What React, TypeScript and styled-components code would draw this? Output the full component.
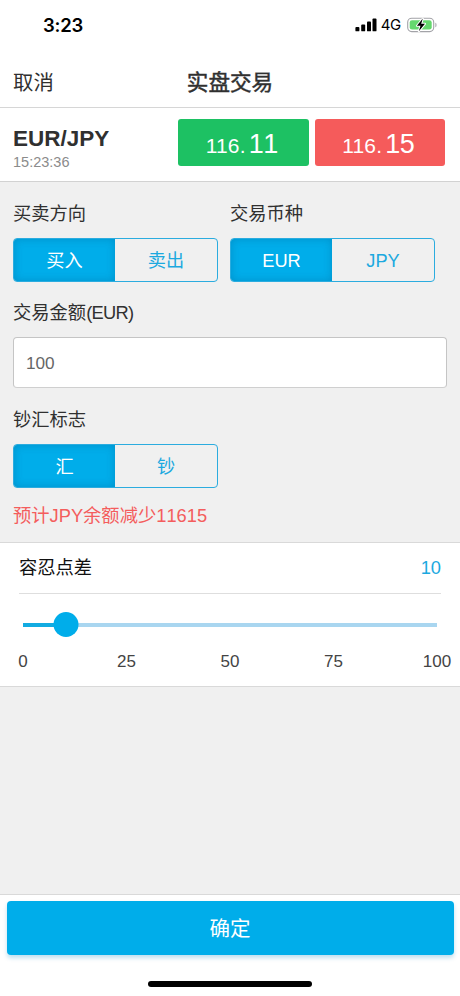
import React, { useState } from 'react';
import styled, { createGlobalStyle, css } from 'styled-components';

const BLUE = '#00adea';

const GlobalStyle = createGlobalStyle`
  * { box-sizing: border-box; }
  body {
    margin: 0;
    font-family: 'Liberation Sans', 'Noto Sans CJK SC', sans-serif;
    color: #303030;
  }
  button, input { font: inherit; margin: 0; }
`;

const Screen = styled.div`
  height: 996px;
  display: flex;
  flex-direction: column;
  background: #f0f0f0;
  overflow: hidden;
`;

const StatusBar = styled.div`
  height: 57px;
  flex: none;
  display: flex;
  justify-content: space-between;
  padding: 12px 22px 0 43px;
  background: #fff;
  color: #000;
`;

const Clock = styled.time`
  font: 600 18.5px/26px Inter, sans-serif;
  letter-spacing: -0.2px;
`;

const StatusIcons = styled.div`
  display: flex;
  align-items: center;
  height: 26px;
  font: 15px/26px Inter, sans-serif;
  svg { display: block; }
`;

const Network = styled.span`
  margin: 0 6px 0 4px;
  letter-spacing: -0.3px;
`;

const NavBar = styled.header`
  height: 51px;
  flex: none;
  display: grid;
  grid-template-columns: 1fr auto 1fr;
  align-items: center;
  padding: 1px 13px 0;
  background: #fff;
  border-bottom: 1px solid #d6d6d6;
`;

const Cancel = styled.button`
  justify-self: start;
  padding: 0;
  border: 0;
  background: none;
  color: #303030;
  font-size: 20.4px;
  line-height: 30px;
`;

const Title = styled.h1`
  margin: 0;
  font-size: 21.6px;
  font-weight: 400;
  line-height: 30px;
  -webkit-text-stroke: 0.45px currentColor;
`;

const QuoteBar = styled.section`
  height: 74px;
  flex: none;
  display: flex;
  gap: 6px;
  padding: 11px 15px 0 13px;
  background: #fff;
  border-bottom: 1px solid #d2d2d2;
`;

const Instrument = styled.div`
  flex: 1;
  padding-top: 7px;
`;

const Pair = styled.div`
  font-size: 22.5px;
  font-weight: 700;
  line-height: 26px;
`;

const QuoteTime = styled.div`
  font-size: 14.5px;
  line-height: 18px;
  margin-top: 1px;
  color: #8b8b8b;
`;

const Price = styled.button<{ $color: string }>`
  width: 130.5px;
  height: 47px;
  display: flex;
  align-items: baseline;
  justify-content: center;
  gap: 3px;
  padding: 10px 3px 0 0;
  border: 0;
  border-radius: 3px;
  background: ${(p) => p.$color};
  color: #fff;
  font-size: 21px;
  line-height: 30px;
  letter-spacing: 0.2px;
`;

const Pips = styled.span`
  font-size: 27px;
  letter-spacing: -0.5px;
  font-kerning: none;
`;

const Form = styled.main`
  flex: none;
  height: 360px;
  padding: 19px 13px 0;
`;

const FieldRow = styled.div`
  display: flex;
  gap: 12px;
`;

const Label = styled.div`
  height: 26px;
  font-size: 18.3px;
  line-height: 26px;
`;

const LabelCode = styled.span`
  letter-spacing: -0.7px;
`;

const Segments = styled.div`
  width: 205px;
  height: 44px;
  margin: 11px 0 18px;
  display: grid;
  grid-template-columns: 101px 1fr;
  border: 1px solid #2bacdf;
  border-radius: 4px;
  overflow: hidden;
`;

const Segment = styled.button<{ $active: boolean }>`
  border: 0;
  padding: 2px 0 0;
  background: transparent;
  color: #1ca9df;
  font-size: 18.2px;
  line-height: 26px;
  ${(p) =>
    p.$active &&
    css`
      background: ${BLUE};
      color: #fff;
      box-shadow: inset 0 0 8px rgba(0, 80, 125, 0.3);
    `}
`;

const AmountInput = styled.input`
  display: block;
  width: 434px;
  height: 51px;
  margin: 11px 0 19px;
  padding: 1px 12px 0;
  border: 1px solid #c5c5c5;
  border-bottom-color: #cfcfcf;
  border-radius: 4px;
  background: #fff;
  color: #666;
  font-size: 17.2px;
  outline: none;
`;

const Estimate = styled.div`
  margin-top: -3px;
  font-size: 18.3px;
  line-height: 26px;
  color: #f45d5d;
  font-kerning: none;
`;

const SpreadPanel = styled.section`
  flex: none;
  height: 145px;
  padding: 0 19px;
  background: #fff;
  border-top: 1px solid #d9d9d9;
  border-bottom: 1px solid #d9d9d9;
`;

const SpreadHead = styled.div`
  height: 51px;
  display: flex;
  justify-content: space-between;
  align-items: center;
  border-bottom: 1px solid #dedede;
  font-size: 18.3px;
  line-height: 26px;
  color: #111;
`;

const SpreadValue = styled.span`
  color: #1ca9df;
`;

const Track = styled.div`
  position: relative;
  height: 4px;
  margin: 29px 4px 0;
  background: #a9d6f0;
`;

const Filled = styled.div`
  height: 100%;
  background: #12abe1;
`;

const Thumb = styled.div`
  position: absolute;
  top: -11px;
  width: 25px;
  height: 25px;
  border-radius: 50%;
  background: ${BLUE};
  transform: translateX(-50%);
`;

const Ticks = styled.div`
  display: flex;
  justify-content: space-between;
  margin: 23px 4px 0;
  font-size: 17px;
  line-height: 24px;
  color: #444;
`;

const Tick = styled.span`
  width: 0;
  display: flex;
  justify-content: center;
`;

const Footer = styled.footer`
  height: 102px;
  flex: none;
  display: flex;
  flex-direction: column;
  align-items: center;
  margin-top: auto;
  padding: 6px 6.5px 0;
  background: #fff;
  border-top: 1px solid #d9d9d9;
`;

const Confirm = styled.button`
  width: 100%;
  height: 54px;
  padding: 1px 0 0;
  border: 0;
  border-radius: 4px;
  background: ${BLUE};
  box-shadow: 0 3px 4px rgba(0, 130, 190, 0.25);
  color: #fff;
  font-size: 20.5px;
  line-height: 30px;
`;

const HomeIndicator = styled.div`
  width: 164px;
  height: 6px;
  margin-top: 26px;
  border-radius: 3px;
  background: #000;
`;

function SignalIcon() {
  return (
    <svg width="22" height="14" viewBox="0 0 22 14">
      <rect x="0.4" y="9" width="4" height="4.3" rx="0.9" />
      <rect x="6.2" y="6.5" width="4" height="6.8" rx="0.9" />
      <rect x="12" y="3.5" width="4" height="9.8" rx="0.9" />
      <rect x="17.5" y="0.6" width="4" height="12.7" rx="0.9" />
    </svg>
  );
}

function BatteryIcon() {
  return (
    <svg width="31" height="16" viewBox="0 0 31 16">
      <rect x="0.7" y="1.2" width="26" height="13.4" rx="4" fill="#fff" stroke="#a3a3a8" strokeWidth="1.1" />
      <rect x="2.7" y="3.2" width="22" height="9.4" rx="2.3" fill="#65d86e" />
      <path d="M28.4 5.7v4.5c1.5-.6 1.5-3.9 0-4.5z" fill="#a3a3a8" />
      <path
        d="M15.8 1.6 9.9 8.8h3.6l-1.7 5.5 6.2-7.5h-3.8z"
        fill="#000"
        stroke="#fff"
        strokeWidth="2"
        strokeLinejoin="round"
        paintOrder="stroke"
      />
    </svg>
  );
}

function SegmentedControl({ options }: { options: [string, string] }) {
  const [selected, setSelected] = useState(options[0]);
  return (
    <Segments>
      {options.map((option) => (
        <Segment key={option} $active={option === selected} onClick={() => setSelected(option)}>
          {option}
        </Segment>
      ))}
    </Segments>
  );
}

export default function App() {
  const [amount, setAmount] = useState('100');
  const spread = 10;

  return (
    <Screen>
      <GlobalStyle />
      <StatusBar>
        <Clock>3:23</Clock>
        <StatusIcons>
          <SignalIcon />
          <Network>4G</Network>
          <BatteryIcon />
        </StatusIcons>
      </StatusBar>
      <NavBar>
        <Cancel>取消</Cancel>
        <Title>实盘交易</Title>
      </NavBar>
      <QuoteBar>
        <Instrument>
          <Pair>EUR/JPY</Pair>
          <QuoteTime>15:23:36</QuoteTime>
        </Instrument>
        <Price $color="#1dc163">
          116.<Pips>11</Pips>
        </Price>
        <Price $color="#f55b5b">
          116.<Pips>15</Pips>
        </Price>
      </QuoteBar>
      <Form>
        <FieldRow>
          <div>
            <Label>买卖方向</Label>
            <SegmentedControl options={['买入', '卖出']} />
          </div>
          <div>
            <Label>交易币种</Label>
            <SegmentedControl options={['EUR', 'JPY']} />
          </div>
        </FieldRow>
        <Label>
          交易金额<LabelCode>(EUR)</LabelCode>
        </Label>
        <AmountInput value={amount} onChange={(e) => setAmount(e.target.value)} />
        <Label>钞汇标志</Label>
        <SegmentedControl options={['汇', '钞']} />
        <Estimate>预计JPY余额减少11615</Estimate>
      </Form>
      <SpreadPanel>
        <SpreadHead>
          <span>容忍点差</span>
          <SpreadValue>{spread}</SpreadValue>
        </SpreadHead>
        <Track>
          <Filled style={{ width: `${spread}%` }} />
          <Thumb style={{ left: `${spread + 0.4}%` }} />
        </Track>
        <Ticks>
          {[0, 25, 50, 75, 100].map((tick) => (
            <Tick key={tick}>{tick}</Tick>
          ))}
        </Ticks>
      </SpreadPanel>
      <Footer>
        <Confirm>确定</Confirm>
        <HomeIndicator />
      </Footer>
    </Screen>
  );
}
